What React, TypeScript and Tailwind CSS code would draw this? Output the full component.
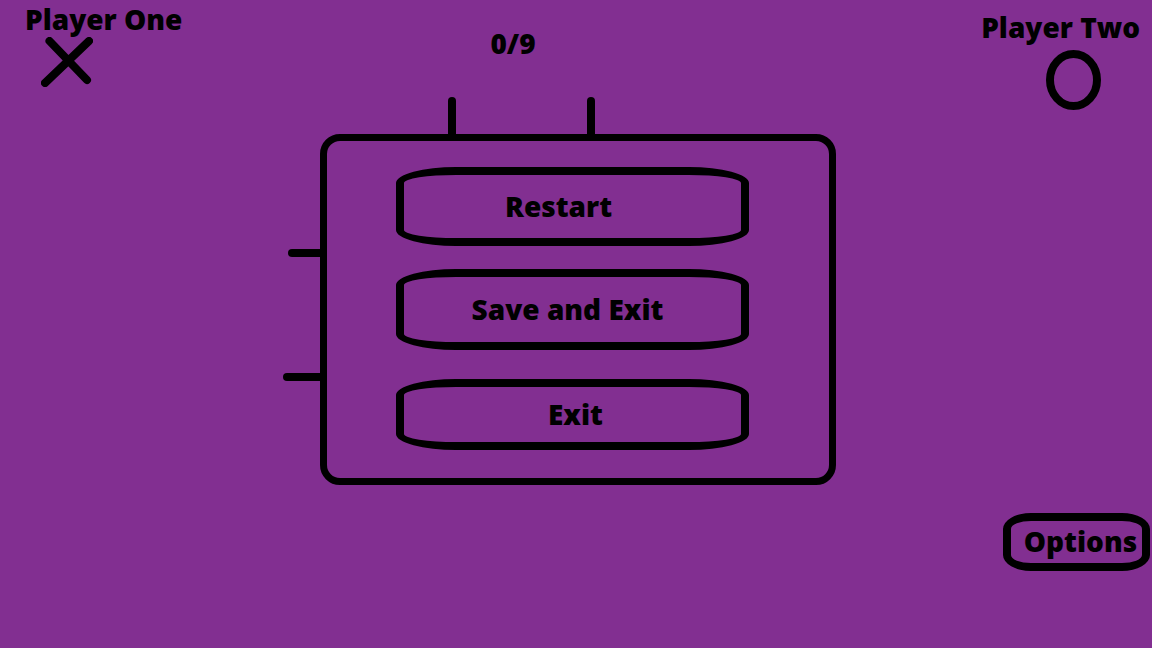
type MenuButtonProps = {
  label: string;
  className: string;
};

function MenuButton({ label, className }: MenuButtonProps) {
  return (
    <button
      type="button"
      className={`w-full cursor-pointer rounded-[60px/16px] border-8 border-black pb-0.5 ${className}`}
    >
      {label}
    </button>
  );
}

function CrossMark() {
  return (
    <svg width="52" height="50" viewBox="0 0 52 50" aria-hidden="true">
      <path
        d="M8.5 4 46 43M48 4 4 46"
        fill="none"
        stroke="#000"
        strokeWidth="8"
        strokeLinecap="round"
      />
    </svg>
  );
}

function NoughtMark() {
  return (
    <svg width="55" height="60" viewBox="0 0 55 60" aria-hidden="true">
      <ellipse cx="27.5" cy="30" rx="23.5" ry="26" fill="none" stroke="#000" strokeWidth="8" />
    </svg>
  );
}

function BoardLines() {
  return (
    <div aria-hidden="true">
      <span className="absolute -top-11 left-[121px] h-10 w-2 rounded-t-full bg-black" />
      <span className="absolute -top-11 left-[260px] h-10 w-2 rounded-t-full bg-black" />
      <span className="absolute top-[108px] -left-[39px] h-2 w-9 rounded-l-full bg-black" />
      <span className="absolute top-[232px] -left-11 h-2 w-10 rounded-l-full bg-black" />
    </div>
  );
}

export default function App() {
  return (
    <main className="flex min-h-screen flex-col bg-[#822f91] font-['Open_Sans','Noto_Sans',sans-serif] text-[28px] leading-8 font-extrabold text-black">
      <header className="grid grid-cols-3">
        <div className="flex flex-col items-start gap-0.5 pt-[3px] pl-[25px]">
          <span className="whitespace-nowrap">Player One</span>
          <div className="pl-4">
            <CrossMark />
          </div>
        </div>
        <div className="pt-[27px] pr-[126px] text-center">0/9</div>
        <div className="flex flex-col items-end gap-[7px] pt-[11px] pr-3">
          <span className="whitespace-nowrap">Player Two</span>
          <div className="pr-[39px]">
            <NoughtMark />
          </div>
        </div>
      </header>

      <div className="mt-6 flex justify-center pl-1">
        <section
          role="dialog"
          aria-label="Options"
          className="relative w-[516px] rounded-[20px] border-[7px] border-black pt-[26px] pr-20 pb-7 pl-[69px]"
        >
          <BoardLines />
          <MenuButton label="Restart" className="h-[79px] pr-7" />
          <MenuButton label="Save and Exit" className="mt-[23px] h-[81px] pr-2.5" />
          <MenuButton label="Exit" className="mt-[29px] h-[71px] pl-1.5" />
        </section>
      </div>

      <button
        type="button"
        className="mt-7 mr-0.5 h-[58px] w-[147px] cursor-pointer self-end rounded-[28px/16px] border-8 border-black pb-0.5 pl-2"
      >
        Options
      </button>
    </main>
  );
}
